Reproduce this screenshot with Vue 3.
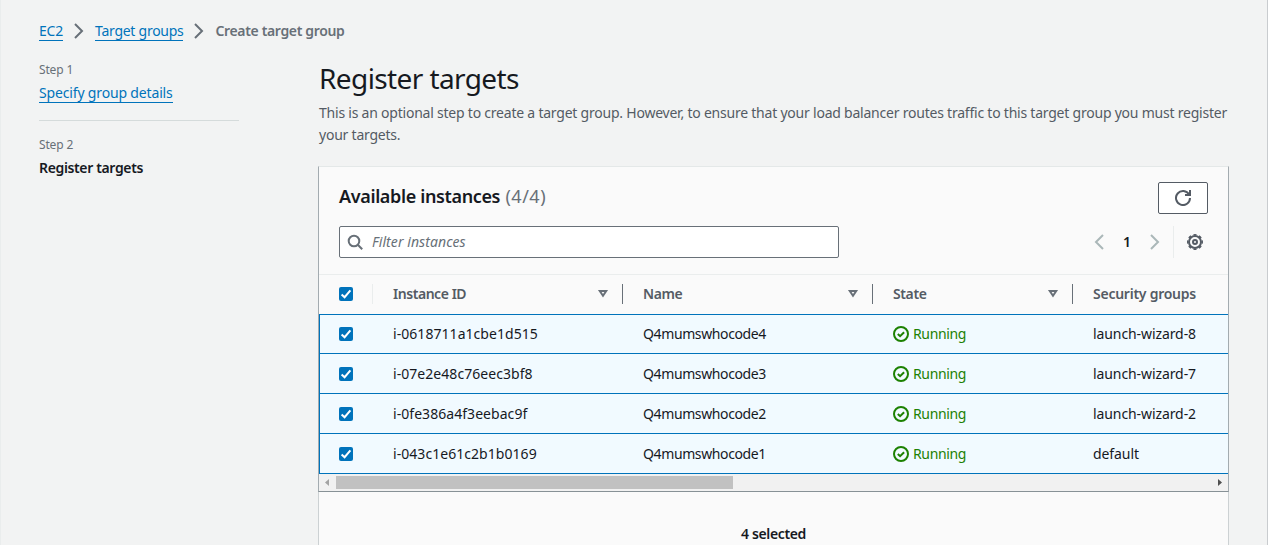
<script setup>
const instances = [
  { id: 'i-0618711a1cbe1d515', name: 'Q4mumswhocode4', state: 'Running', group: 'launch-wizard-8' },
  { id: 'i-07e2e48c76eec3bf8', name: 'Q4mumswhocode3', state: 'Running', group: 'launch-wizard-7' },
  { id: 'i-0fe386a4f3eebac9f', name: 'Q4mumswhocode2', state: 'Running', group: 'launch-wizard-2' },
  { id: 'i-043c1e61c2b1b0169', name: 'Q4mumswhocode1', state: 'Running', group: 'default' },
]
const columns = [
  { label: 'Instance ID', cls: 'h-id', sortable: true },
  { label: 'Name', cls: 'h-name', sortable: true },
  { label: 'State', cls: 'h-state', sortable: true },
  { label: 'Security groups', cls: 'h-group', sortable: false },
]
</script>

<template>
  <div class="page">
    <nav class="crumbs">
      <a class="link ec2">EC2</a>
      <svg class="chev" viewBox="0 0 16 16"><path d="M4 1l7 7-7 7" /></svg>
      <a class="link tg">Target groups</a>
      <svg class="chev" viewBox="0 0 16 16"><path d="M4 1l7 7-7 7" /></svg>
      <span class="current">Create target group</span>
    </nav>

    <div class="body">
      <aside class="steps">
        <div class="step-no">Step 1</div>
        <div class="step-name"><a class="link sg">Specify group details</a></div>
        <hr class="rule" />
        <div class="step-no">Step 2</div>
        <div class="step-name active">Register targets</div>
      </aside>

      <main class="main">
        <h1>Register targets</h1>
        <p class="desc">This is an optional step to create a target group. However, to ensure that your load balancer routes traffic to this target group you must register<br />your targets.</p>

        <section class="card">
          <div class="upper">
            <header class="card-head">
              <h2>Available instances <span class="count">(4/4)</span></h2>
              <button class="refresh" aria-label="Refresh">
                <svg viewBox="0 0 16 16"><path d="M10 5h5V0" /><path d="M15 8a7 7 0 1 1-.9-3.4" /></svg>
              </button>
            </header>
            <div class="tools">
              <div class="search">
                <svg viewBox="0 0 16 16"><circle cx="7" cy="7" r="5.3" /><path d="M10.8 10.8l4.4 4.4" /></svg>
                <span>Filter instances</span>
              </div>
              <div class="pager">
                <svg class="chev" viewBox="0 0 16 16"><path d="M12 1L5 8l7 7" /></svg>
                <b>1</b>
                <svg class="chev" viewBox="0 0 16 16"><path d="M4 1l7 7-7 7" /></svg>
                <span class="bar"></span>
                <svg class="gear" viewBox="0 0 16 16">
                  <circle cx="8" cy="8" r="6" />
                  <circle class="teeth" cx="8" cy="8" r="7.3" pathLength="80" />
                  <circle cx="8" cy="8" r="2" />
                </svg>
              </div>
            </div>

            <div class="row head">
              <div class="cell check">
                <span class="box"><svg viewBox="0 0 14 14"><path d="M2.6 7.4l3 2.8L11.4 3.4" /></svg></span>
              </div>
              <div v-for="c in columns" :key="c.label" class="cell" :class="[c.cls, { sortable: c.sortable }]">
                <span>{{ c.label }}</span>
                <svg v-if="c.sortable" class="sort" viewBox="0 0 16 16"><path d="M4.8 5h6.4L8 9.8z" /></svg>
              </div>
            </div>
            <div v-for="i in instances" :key="i.id" class="row item">
              <div class="cell check">
                <span class="box"><svg viewBox="0 0 14 14"><path d="M2.6 7.4l3 2.8L11.4 3.4" /></svg></span>
              </div>
              <div class="cell id">{{ i.id }}</div>
              <div class="cell name">{{ i.name }}</div>
              <div class="cell state">
                <svg viewBox="0 0 16 16"><circle cx="8" cy="8" r="7" /><path d="M4.8 8l2.3 2.2 4-4" /></svg>
                <span>{{ i.state }}</span>
              </div>
              <div class="cell group">{{ i.group }}</div>
            </div>

            <div class="scroll">
              <svg class="arrow left" viewBox="0 0 4 7"><path d="M4 0v7L0 3.5z" /></svg>
              <div class="thumb"></div>
              <svg class="arrow right" viewBox="0 0 4 7"><path d="M0 0v7l4-3.5z" /></svg>
            </div>
          </div>
          <div class="lower">4 selected</div>
        </section>
      </main>
    </div>
  </div>
</template>

<style>
body {
  background: #fff;
  overflow: hidden;
}
</style>

<style scoped>
.page {
  box-sizing: border-box;
  width: 1268px;
  height: 545px;
  padding: 20px 38px 0;
  overflow: hidden;
  background: #f2f3f3;
  border-left: 1px solid #eaeded;
  border-right: 1px solid #c9cccf;
  font: 14px/22px "Noto Sans", "Open Sans", sans-serif;
  color: #16191f;
}
svg {
  display: block;
  flex: none;
  fill: none;
  stroke: currentColor;
  stroke-width: 2;
}
.link {
  color: #0073bb;
  border-bottom: 1px solid #0073bb;
  white-space: nowrap;
}
.crumbs {
  display: flex;
  height: 22px;
  align-items: flex-start;
}
.crumbs .link {
  line-height: 22px;
  height: 20px;
}
.crumbs .chev {
  width: 16px;
  height: 16px;
  margin: 3px 8px 0;
  color: #687078;
}
.ec2 {
  width: 24px;
  letter-spacing: -0.2px;
}
.tg {
  width: 88px;
  letter-spacing: -0.26px;
}
.current {
  margin-left: 0.5px;
  color: #687078;
  font-weight: 600;
  letter-spacing: -0.35px;
}
.body {
  display: flex;
  gap: 79px;
  padding-top: 16px;
}
.steps {
  width: 200px;
  flex: none;
}
.step-no {
  font-size: 12px;
  line-height: 24px;
  letter-spacing: -0.15px;
  color: #687078;
}
.step-name {
  line-height: 22px;
}
.active {
  font-weight: 600;
  letter-spacing: -0.36px;
}
.sg {
  letter-spacing: -0.16px;
}
.rule {
  height: 1px;
  border: 0;
  margin: 16px 0 12px;
  background: #d5dbdb;
}
.main {
  width: 911px;
  flex: none;
  padding-top: 2px;
}
h1 {
  margin: 0 0 6px 1px;
  font-size: 28px;
  line-height: 36px;
  font-weight: 400;
  letter-spacing: -0.6px;
}
.desc {
  margin: 0 0 20px 1px;
  white-space: nowrap;
  letter-spacing: -0.222px;
  color: #545b64;
}
.upper {
  box-sizing: border-box;
  height: 326px;
  background: #fafafa;
  border: 1px solid #879196;
  border-top-color: #e4e8e8;
  border-left-color: #a3abb0;
  border-right-color: #a3abb0;
}
.card-head {
  display: flex;
  justify-content: space-between;
  padding: 15px 20px 0;
}
h2 {
  margin: 3px 0 0;
  font-size: 18px;
  line-height: 22px;
  font-weight: 600;
  letter-spacing: -0.36px;
}
.count {
  margin-left: 1px;
  font-weight: 400;
  letter-spacing: 0.5px;
  color: #687078;
}
.refresh {
  display: flex;
  box-sizing: border-box;
  align-items: center;
  justify-content: center;
  width: 50px;
  height: 32px;
  padding: 0;
  background: #fff;
  border: 1px solid #545b64;
  border-radius: 2px;
  color: #545b64;
}
.refresh svg,
.search svg,
.gear,
.state svg {
  width: 16px;
  height: 16px;
}
.tools {
  display: flex;
  justify-content: space-between;
  padding: 12px 20px 16px;
}
.search {
  display: flex;
  box-sizing: border-box;
  align-items: center;
  gap: 9px;
  width: 500px;
  height: 32px;
  padding-left: 7px;
  background: #fff;
  border: 1px solid #687078;
  border-radius: 2px;
  color: #687078;
  font-style: italic;
  letter-spacing: 0.07px;
}
.pager {
  display: flex;
  align-items: center;
  padding-right: 5px;
}
.pager .chev {
  width: 16px;
  height: 16px;
  color: #aab7b8;
}
.pager b {
  width: 40px;
  text-align: center;
  font-weight: 600;
}
.bar {
  width: 1px;
  height: 32px;
  margin: 0 13px 0 10px;
  background: #eaeded;
}
.gear {
  color: #545b64;
}
.teeth {
  stroke-width: 1.4;
  stroke-dasharray: 5.6 4.4;
  stroke-dashoffset: 2.8;
}
.row {
  display: grid;
  grid-template-columns: 54px 250px 250px 200px 155px;
  box-sizing: border-box;
  height: 40px;
}
.head {
  padding-bottom: 1px;
  border-top: 1px solid #eaeded;
  font-weight: 600;
  color: #545b64;
}
.item {
  background: #f1faff;
  border-bottom: 1px solid #0073bb;
  box-shadow: inset 1px 0 #0073bb;
}
.head + .item {
  box-shadow: inset 1px 0 #0073bb, inset 0 1px #0073bb;
}
.cell {
  display: flex;
  align-items: center;
  align-self: center;
  height: 20px;
  padding-left: 20px;
  box-sizing: border-box;
}
.head .check {
  border-right: 1px solid #eaeded;
}
.sortable {
  justify-content: space-between;
  padding-right: 11px;
  border-right: 1px solid #687078;
}
.sort {
  width: 16px;
  height: 16px;
  color: #687078;
}
.box {
  display: block;
  width: 14px;
  height: 14px;
  border-radius: 2px;
  background: #0073bb;
  color: #fff;
}
.h-id {
  letter-spacing: -0.45px;
}
.h-name,
.h-state {
  letter-spacing: -0.38px;
}
.h-group {
  letter-spacing: -0.25px;
}
.id {
  letter-spacing: 0.05px;
}
.name {
  letter-spacing: -0.38px;
}
.state {
  gap: 4px;
  color: #1d8102;
  letter-spacing: -0.36px;
}
.group {
  letter-spacing: -0.09px;
}
.scroll {
  display: flex;
  align-items: center;
  height: 17px;
  padding: 0 6px;
  background: #f1f1f1;
}
.arrow {
  width: 4px;
  height: 7px;
  stroke: none;
  fill: #505050;
}
.arrow.left {
  fill: #a3a3a3;
}
.thumb {
  width: 397px;
  height: 13px;
  margin: 0 auto 0 7px;
  background: #c1c1c1;
}
.lower {
  box-sizing: border-box;
  height: 60px;
  padding-top: 31px;
  background: #fafafa;
  border: 0 solid #ccd1d3;
  border-width: 0 1px;
  text-align: center;
  font-weight: 600;
  letter-spacing: -0.36px;
}
</style>
